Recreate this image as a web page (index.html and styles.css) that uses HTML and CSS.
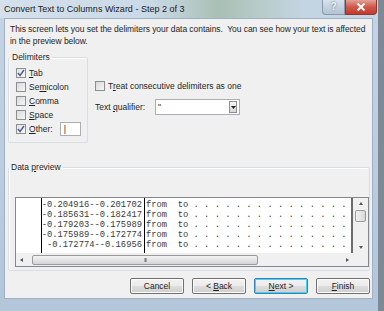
FILE: index.html
```html
<!DOCTYPE html>
<html lang="en">
<head>
  <meta charset="UTF-8" />
  <title>Convert Text to Columns Wizard - Step 2 of 3</title>
  <link rel="stylesheet" href="styles.css">
</head>
<body>
  <div class="window">
    <div class="titlebar">
      <span class="title">Convert Text to Columns Wizard - Step 2 of 3</span>
      <div class="caption-buttons">
        <span class="cap-help">?</span>
        <span class="cap-close">
          <svg width="10" height="8" viewBox="0 0 10 8"><path d="M1.5 0.5 L8.5 7.5 M8.5 0.5 L1.5 7.5" stroke="#fff" stroke-width="2"/></svg>
        </span>
      </div>
    </div>

    <div class="client">
      <p class="intro">This screen lets you set the delimiters your data contains.&nbsp; You can see how your text is affected in the preview below.</p>

      <div class="options">
        <fieldset class="group delimiters">
          <legend>Delimiters</legend>
          <label class="check-row"><span class="box checked"></span><span><u>T</u>ab</span></label>
          <label class="check-row"><span class="box"></span><span>Se<u>m</u>icolon</span></label>
          <label class="check-row"><span class="box"></span><span><u>C</u>omma</span></label>
          <label class="check-row"><span class="box"></span><span><u>S</u>pace</span></label>
          <label class="check-row"><span class="box checked"></span><span><u>O</u>ther:</span><span class="other-input">|</span></label>
        </fieldset>

        <div class="side">
          <label class="check-row treat"><span class="box"></span><span>T<u>r</u>eat consecutive delimiters as one</span></label>
          <div class="qualifier">
            <span class="qual-label">Text <u>q</u>ualifier:</span>
            <span class="combo">
              <span class="combo-value">"</span>
              <span class="combo-btn"><svg width="5" height="3" viewBox="0 0 5 3"><path d="M0 0 H5 L2.5 3 Z" fill="#222"/></svg></span>
            </span>
          </div>
        </div>
      </div>

      <fieldset class="group preview">
        <legend>Data <u>p</u>review</legend>
        <div class="preview-box">
          <div class="preview-main">
            <div class="grid">
              <div class="col col-blank"></div>
              <div class="col col-num">
                <div>-0.204916--0.201702</div>
                <div>-0.185631--0.182417</div>
                <div>-0.179203--0.175989</div>
                <div>-0.175989--0.172774</div>
                <div>-0.172774--0.16956</div>
              </div>
              <div class="col col-text">
                <div>from  to . . . . . . . . . . . . . . .</div>
                <div>from  to . . . . . . . . . . . . . . .</div>
                <div>from  to . . . . . . . . . . . . . . .</div>
                <div>from  to . . . . . . . . . . . . . . .</div>
                <div>from  to . . . . . . . . . . . . . . .</div>
              </div>
            </div>
            <div class="vscroll">
              <span class="arrow up"></span>
              <span class="vthumb"></span>
              <span class="arrow down"></span>
            </div>
          </div>
          <div class="hscroll-row">
            <div class="hscroll">
              <span class="arrow left"></span>
              <span class="hthumb"><span class="grip">III</span></span>
              <span class="arrow right"></span>
            </div>
            <div class="corner"></div>
          </div>
        </div>
      </fieldset>

      <div class="buttons">
        <span class="btn">Cancel</span>
        <span class="btn">&lt; <u>B</u>ack</span>
        <span class="btn default"><u>N</u>ext &gt;</span>
        <span class="btn"><u>F</u>inish</span>
      </div>
    </div>
  </div>
</body>
</html>
```

FILE: styles.css
```css
body {
  margin: 0;
  width: 384px;
  height: 311px;
  overflow: hidden;
  background: #7d8a96;
  font-family: "Liberation Sans", Arial, sans-serif;
  font-size: 8.5px;
  color: #1e1e1e;
}

.window {
  width: 378px;
  height: 311px;
  box-sizing: border-box;
  padding: 0 5px 0 4px;
  background: linear-gradient(#c4d4e4, #b3c6da);
}

/* title bar */
.titlebar {
  height: 18px;
  display: flex;
  align-items: flex-start;
  justify-content: space-between;
  margin: 0 -5px 0 -4px;
  background: linear-gradient(90deg, #d4e1ec 0%, #cad9e6 40%, #a9c0b4 58%, #b7cbc8 68%, #c3d4e2 80%, #c6d5e3 100%);
}

.title {
  padding: 4px 0 0 4px;
  font-size: 9px;
  color: #1a1a1a;
}

.caption-buttons {
  display: flex;
  margin-right: 1px;
}

.cap-help {
  width: 23px;
  height: 15px;
  box-sizing: border-box;
  border: 1px solid #8a9aab;
  border-top: none;
  border-radius: 0 0 0 4px;
  background: linear-gradient(#d8e2ec, #b2c3d3);
  color: #f4f7fa;
  font-weight: bold;
  font-size: 10px;
  text-align: center;
  line-height: 14px;
  text-shadow: 0 0 2px #4c5d70;
}

.cap-close {
  width: 32px;
  height: 15px;
  box-sizing: border-box;
  border: 1px solid #8b3a33;
  border-top: none;
  border-radius: 0 0 4px 0;
  background: linear-gradient(#e3a196, #cf5849 50%, #c23a2b);
  display: flex;
  align-items: center;
  justify-content: center;
}

/* client area */
.client {
  height: 281px;
  box-sizing: border-box;
  border: 1px solid #9fb0c2;
  background: #f0f0f0;
  padding: 4px 2px 0 3px;
}

.intro {
  margin: 0;
  padding-left: 2px;
  line-height: 12px;
  height: 24px;
  letter-spacing: -0.06px;
}

.options {
  display: flex;
  margin-top: 4px;
}

.group {
  margin: 0;
  border: 1px solid #d5dfe5;
  box-shadow: inset 1px 1px 0 #fff;
  border-radius: 2px;
}

.group legend {
  padding: 0 2px;
  margin-left: -6px;
  line-height: 12px;
}

.delimiters {
  width: 80px;
  box-sizing: border-box;
  padding: 3px 0 6px 7px;
}

.check-row {
  display: flex;
  align-items: center;
  height: 14px;
  white-space: nowrap;
}

.box {
  width: 10px;
  height: 10px;
  box-sizing: border-box;
  border: 1px solid #8e8f8f;
  background: linear-gradient(135deg, #d7d9dc, #f6f6f6);
  margin-right: 3px;
  flex: none;
}

.box.checked {
  background: url("data:image/svg+xml,%3Csvg xmlns='http://www.w3.org/2000/svg' width='8' height='8'%3E%3Cpath d='M1 4 L3 6.5 L7 1' stroke='%234a5f97' stroke-width='1.4' fill='none'/%3E%3C/svg%3E") center no-repeat, linear-gradient(135deg, #dfe1e4, #fafafa);
}

.other-input {
  width: 21px;
  height: 14px;
  box-sizing: border-box;
  border: 1px solid #abadb3;
  background: #fff;
  margin-left: 7px;
  padding-left: 3px;
  line-height: 12px;
}

.side {
  margin-left: 7px;
  display: flex;
  flex-direction: column;
}

.treat {
  margin-top: 28px;
}

.qualifier {
  display: flex;
  align-items: center;
  margin-top: 6px;
}

.qual-label {
  width: 60px;
}

.combo {
  width: 85px;
  height: 16px;
  box-sizing: border-box;
  border: 1px solid #abadb3;
  background: #fff;
  display: flex;
  align-items: center;
  justify-content: space-between;
}

.combo-value {
  padding-left: 2px;
}

.combo-btn {
  width: 8px;
  height: 12px;
  margin-right: 2px;
  box-sizing: border-box;
  border: 1px solid #8e8f8f;
  background: linear-gradient(#f4f4f4, #d6d6d6);
  display: flex;
  align-items: center;
  justify-content: center;
}

/* data preview */
.preview {
  width: 362px;
  box-sizing: border-box;
  margin-top: 18px;
  padding: 24px 0 3px 6px;
}

.preview-box {
  width: 354px;
  box-sizing: border-box;
  border: 1px solid #828790;
  background: #fff;
}

.preview-main {
  display: flex;
  height: 55px;
}

.grid {
  flex: 1;
  display: flex;
  border-right: 2px solid #6b6b6b;
  font-family: "Liberation Mono", "Courier New", monospace;
  font-size: 8.8px;
  line-height: 10px;
  color: #3a3a3a;
  overflow: hidden;
}

.col {
  padding-top: 2px;
  border-right: 1px solid #000;
}

.col div {
  height: 10px;
  white-space: pre;
}

.col-blank {
  width: 25px;
}

.col-num {
  width: 100px;
  padding-right: 2px;
}

.col-num div {
  display: flex;
  justify-content: flex-end;
}

.col-text {
  flex: 1;
  padding-left: 1px;
  border-right: none;
}

.vscroll {
  width: 15px;
  background: #f0f0f0;
  display: flex;
  flex-direction: column;
  align-items: center;
}

.vthumb {
  width: 11px;
  height: 12px;
  margin-top: 5px;
  box-sizing: border-box;
  border: 1px solid #9a9a9a;
  border-radius: 2px;
  background: linear-gradient(90deg, #f3f3f3, #d8d8d8);
}

.arrow {
  width: 0;
  height: 0;
  border: 2px solid transparent;
}

.arrow.up {
  margin-top: 4px;
  border-bottom: 3px solid #555;
  border-top: none;
}

.arrow.down {
  margin-top: auto;
  margin-bottom: 4px;
  border-top: 3px solid #555;
  border-bottom: none;
}

.hscroll-row {
  display: flex;
  height: 13px;
}

.hscroll {
  flex: 1;
  display: flex;
  align-items: center;
  background: #f0f0f0;
  padding: 0 4px;
}

.arrow.left {
  border-right: 3px solid #555;
  border-left: none;
}

.arrow.right {
  margin-left: auto;
  border-left: 3px solid #555;
  border-right: none;
}

.hthumb {
  width: 226px;
  height: 10px;
  margin-left: 9px;
  box-sizing: border-box;
  border: 1px solid #9a9a9a;
  border-radius: 2px;
  background: linear-gradient(#f3f3f3, #d5d5d5);
  display: flex;
  align-items: center;
  justify-content: center;
}

.grip {
  font-size: 6px;
  letter-spacing: -1px;
  color: #555;
}

.corner {
  width: 15px;
  background: #f0f0f0;
}

/* buttons */
.buttons {
  display: flex;
  justify-content: flex-end;
  gap: 8px;
  margin-top: 7px;
}

.btn {
  width: 54px;
  height: 16px;
  box-sizing: border-box;
  border: 1px solid #707070;
  border-radius: 2px;
  background: linear-gradient(#f2f2f2 0%, #ebebeb 50%, #dddddd 51%, #cfcfcf 100%);
  box-shadow: inset 0 0 0 1px #fcfcfc;
  text-align: center;
  line-height: 14px;
}

.btn.default {
  border-color: #3c7fb1;
  box-shadow: inset 0 0 0 1px #48d1f5;
}
```
